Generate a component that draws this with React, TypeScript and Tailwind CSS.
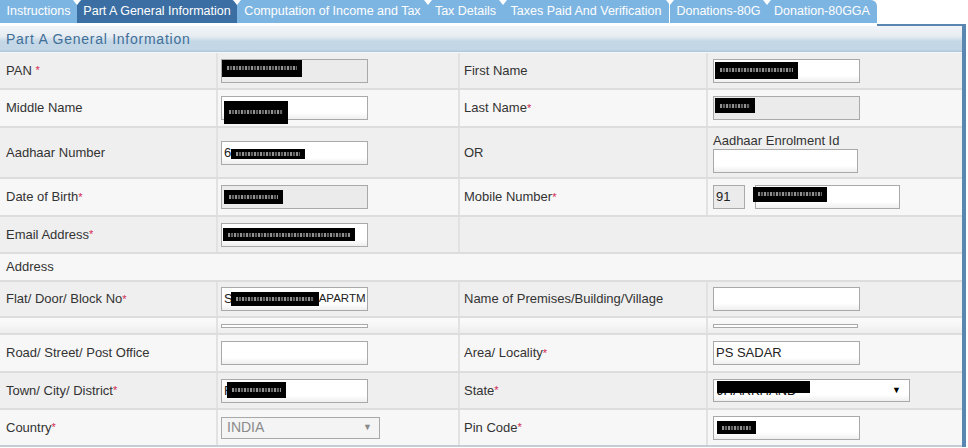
import React from "react"

const tabs = [
  { label: "Instructions", w: 77 },
  { label: "Part A General Information", w: 160, active: true },
  { label: "Computation of Income and Tax", w: 191 },
  { label: "Tax Details", w: 75 },
  { label: "Taxes Paid And Verification", w: 166 },
  { label: "Donations-80G", w: 98, line: true },
  { label: "Donation-80GGA", w: 110, last: true },
]

const Star = () => <span className="text-[#d3284f] text-[11px] align-top">*</span>

// black redaction block with some pixel noise in it
function Redact({ w, h, className = "" }: { w: number; h: number; className?: string }) {
  return (
    <span
      className={"inline-flex items-center shrink-0 bg-black px-[5px] " + className}
      style={{ width: w, height: h }}
    >
      <span className="block h-[4px] w-full bg-[repeating-linear-gradient(90deg,#b5b5b5_0_2px,#1a1a1a_2px_3px,#7a7a7a_3px_5px,#111_5px_6px)] opacity-80" />
    </span>
  )
}

function Field({
  w = 147,
  h = 24,
  disabled = false,
  children,
  className = "",
}: {
  w?: number
  h?: number
  disabled?: boolean
  children?: React.ReactNode
  className?: string
}) {
  return (
    <div
      className={
        "flex items-center shrink-0 border border-[#a9a9a9] text-[13px] text-[#222] overflow-hidden whitespace-nowrap " +
        (disabled ? "bg-[#ebebeb] " : "bg-[linear-gradient(#ffffff_0%,#ffffff_70%,#efefef_100%)] ") +
        className
      }
      style={{ width: w, height: h }}
    >
      {children}
    </div>
  )
}

function Row({
  h,
  bg,
  children,
  last = false,
}: {
  h: number
  bg: string
  children: React.ReactNode
  last?: boolean
}) {
  return (
    <div
      className={
        "grid grid-cols-[216px_242px_248px_256px] border-b-2 " +
        (last ? "border-[#c5ccd3] " : "border-[#dddddd] ") +
        bg
      }
      style={{ height: h + 2 }}
    >
      {children}
    </div>
  )
}

const Label = ({ children, first = false }: { children: React.ReactNode; first?: boolean }) => (
  <div
    className={
      "flex items-center text-[13px] text-[#333] whitespace-nowrap " +
      (first ? "pl-[6px]" : "pl-[4px] border-l-2 border-[#e2e2e2]")
    }
  >
    {children}
  </div>
)

const Cell = ({ children, right = false }: { children?: React.ReactNode; right?: boolean }) => (
  <div
    className={
      "flex items-center border-l-2 border-[#e2e2e2] " + (right ? "pl-[5px]" : "pl-[3px]")
    }
  >
    {children}
  </div>
)

export default function App() {
  return (
    <div className="w-[968px] h-[448px] bg-white overflow-hidden font-['Liberation_Sans',Arial,sans-serif]">
      {/* tab strip */}
      <div className="flex w-[966px] h-[26px]">
        {tabs.map((t, i) => (
          <div
            key={t.label}
            className={
              "relative h-[23px] flex items-center justify-center text-[12.5px] text-white whitespace-nowrap " +
              (t.active ? "bg-[#3b6ea3] rounded-t-[5px] " : "bg-[#7db5e2] ") +
              (t.last ? "rounded-tr-[6px] " : "") +
              (t.line ? "border-l border-white " : "")
            }
            style={{ width: t.w }}
          >
            {t.label}
            {i > 0 && (
              <span className="absolute -left-[4px] top-0 w-0 h-0 border-l-[4px] border-r-[4px] border-t-[5px] border-l-transparent border-r-transparent border-t-white z-10" />
            )}
          </div>
        ))}
        <div className="flex-1 h-[26px] border-b-2 border-[#5a86b2]" />
      </div>

      <div className="w-[966px] border-r-4 border-[#5a86b2]">
        {/* panel header */}
        <div className="h-[27px] flex items-center pl-[6px] border-b border-[#f3f7fa] bg-[linear-gradient(#f2f5f8_0%,#e6ecf1_40%,#d3e1eb_50%,#c4d7e6_60%,#c2d6e5_92%,#a9c4d9_100%)]">
          <span className="text-[14px] tracking-[0.75px] text-[#3f6f99]">Part A General Information</span>
        </div>

        {/* PAN */}
        <Row h={35} bg="bg-[#efefef]">
          <Label first>
            PAN&nbsp;<Star />
          </Label>
          <Cell>
            <Field disabled className="items-start pt-[0px]">
              <Redact w={80} h={17} />
            </Field>
          </Cell>
          <Label>First Name</Label>
          <Cell right>
            <Field className="items-start pt-[2px] pl-[1px]">
              <Redact w={83} h={17} />
            </Field>
          </Cell>
        </Row>

        {/* Middle name */}
        <Row h={36} bg="bg-[#f7f7f7]">
          <Label first>Middle Name</Label>
          <Cell>
            <Field className="overflow-visible pl-[2px]">
              <Redact w={64} h={23} className="translate-y-[4px]" />
            </Field>
          </Cell>
          <Label>
            Last Name<Star />
          </Label>
          <Cell right>
            <Field disabled className="items-start pt-[1px] pl-[1px]">
              <Redact w={40} h={15} />
            </Field>
          </Cell>
        </Row>

        {/* Aadhaar */}
        <Row h={49} bg="bg-[#efefef]">
          <Label first>Aadhaar Number</Label>
          <Cell>
            <Field className="pl-[2px] overflow-visible">
              6
              <Redact w={74} h={10} className="translate-y-[1px]" />
            </Field>
          </Cell>
          <Label>OR</Label>
          <div className="flex flex-col justify-center border-l-2 border-[#e2e2e2] pl-[5px]">
            <div className="text-[13px] text-[#333] leading-[15px] mb-[1px]">Aadhaar Enrolment Id</div>
            <Field w={145} />
          </div>
        </Row>

        {/* DOB / Mobile */}
        <Row h={36} bg="bg-[#f7f7f7]">
          <Label first>
            Date of Birth<Star />
          </Label>
          <Cell>
            <Field disabled className="pl-[2px]">
              <Redact w={59} h={14} />
            </Field>
          </Cell>
          <Label>
            Mobile Number<Star />
          </Label>
          <Cell right>
            <Field w={32} disabled className="pl-[2px]">
              91
            </Field>
            <Field w={145} className="ml-[10px] overflow-visible">
              <Redact w={74} h={15} className="-ml-[3px] -translate-y-[3px]" />
            </Field>
          </Cell>
        </Row>

        {/* Email */}
        <div
          className="grid grid-cols-[216px_242px_504px] border-b-2 border-[#dddddd] bg-[#efefef]"
          style={{ height: 37 }}
        >
          <Label first>
            Email Address<Star />
          </Label>
          <Cell>
            <Field className="pl-[1px]">
              <Redact w={132} h={13} />
            </Field>
          </Cell>
          <div className="border-l-2 border-[#e2e2e2]" />
        </div>

        {/* Address heading */}
        <div className="h-[28px] flex items-center pl-[6px] border-b-2 border-[#dddddd] bg-[#f7f7f7] text-[13px] text-[#333]">
          Address
        </div>

        {/* Flat */}
        <Row h={34} bg="bg-[#efefef]">
          <Label first>
            Flat/ Door/ Block No<Star />
          </Label>
          <Cell>
            <Field className="pl-[2px]">
              S
              <Redact w={88} h={14} className="-ml-[2px]" />
              <span className="text-[11.5px]">APARTM</span>
            </Field>
          </Cell>
          <Label>Name of Premises/Building/Village</Label>
          <Cell right>
            <Field />
          </Cell>
        </Row>

        {/* collapsed row */}
        <Row h={15} bg="bg-[linear-gradient(#fbfbfb_0%,#f6f6f6_50%,#ededed_100%)]">
          <div />
          <Cell>
            <Field h={4} className="bg-white" />
          </Cell>
          <div className="border-l-2 border-[#e2e2e2]" />
          <Cell right>
            <Field w={145} h={4} className="bg-white" />
          </Cell>
        </Row>

        {/* Road / Area */}
        <Row h={36} bg="bg-[#f7f7f7]">
          <Label first>Road/ Street/ Post Office</Label>
          <Cell>
            <Field />
          </Cell>
          <Label>
            Area/ Locality<Star />
          </Label>
          <Cell right>
            <Field className="pl-[2px]">PS SADAR</Field>
          </Cell>
        </Row>

        {/* Town / State */}
        <Row h={35} bg="bg-[#efefef]">
          <Label first>
            Town/ City/ District<Star />
          </Label>
          <Cell>
            <Field className="pl-[2px] overflow-visible">
              F
              <Redact w={59} h={16} className="-ml-[5px] -translate-y-[1px]" />
            </Field>
          </Cell>
          <Label>
            State<Star />
          </Label>
          <Cell right>
            <Field w={197} h={23} className="relative pl-[3px] justify-between pr-[8px]">
              <span className="relative text-[13px] leading-none">
                <span className="text-[#111]">JHARKHAND</span>
                <span className="absolute left-0 -top-[3px] w-[93px] h-[12px] bg-black" />
              </span>
              <span className="text-[9px] text-black">▼</span>
            </Field>
          </Cell>
        </Row>

        {/* Country / Pin */}
        <Row h={35} bg="bg-[#f7f7f7]" last>
          <Label first>
            Country<Star />
          </Label>
          <Cell>
            <Field w={159} h={22} disabled className="bg-[#f4f4f4] justify-between pl-[5px] pr-[7px]">
              <span className="text-[14px] text-[#8a8a8a]">INDIA</span>
              <span className="text-[9px] text-[#8a8a8a]">▼</span>
            </Field>
          </Cell>
          <Label>
            Pin Code<Star />
          </Label>
          <Cell right>
            <Field className="pl-[3px]">
              <Redact w={39} h={13} />
            </Field>
          </Cell>
        </Row>
      </div>
    </div>
  )
}
